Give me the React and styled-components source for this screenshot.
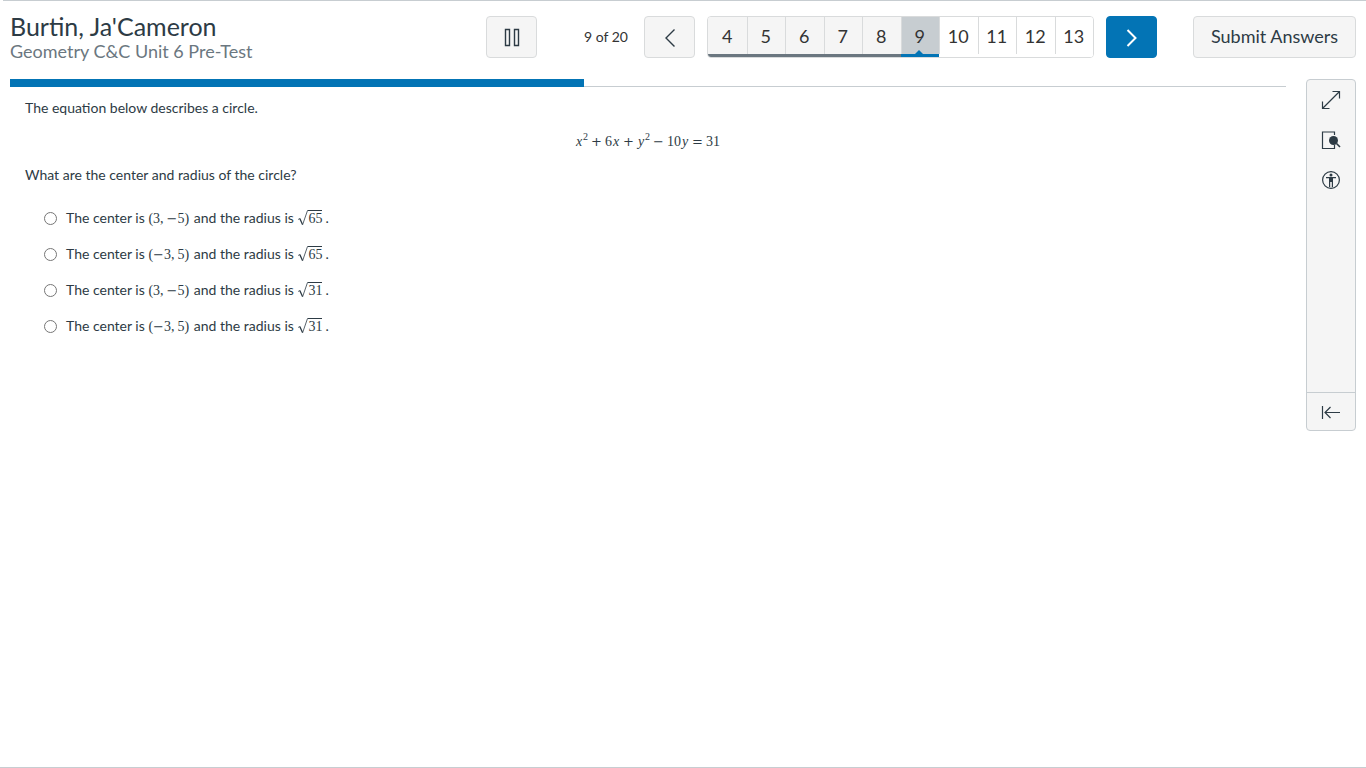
import React, { useState } from "react";
import styled, { createGlobalStyle } from "styled-components";

const GlobalStyle = createGlobalStyle`
  * {
    box-sizing: border-box;
  }
  body {
    margin: 0;
    background: #ffffff;
    color: #2d3b45;
    font-family: Lato, "Liberation Sans", sans-serif;
    font-size: 14px;
    line-height: 20px;
  }
  button {
    font-family: inherit;
    color: inherit;
    padding: 0;
    cursor: pointer;
  }
`;

const Page = styled.div`
  display: flex;
  flex-direction: column;
  min-height: 100vh;
  border-bottom: 1px solid #c7cdd1;
`;

const TopRule = styled.div`
  height: 1px;
  margin-left: 3px;
  background: #c7cdd1;
`;

const Header = styled.header`
  display: flex;
  align-items: flex-start;
  padding: 15px 10px 0;
  height: 78px;
`;

const Heading = styled.div`
  flex: 1;
  min-width: 0;
`;

const Student = styled.h1`
  margin: 0;
  font-size: 25px;
  font-weight: 400;
  line-height: 20px;
`;

const QuizTitle = styled.h2`
  margin: 0;
  color: #6b7780;
  font-size: 18px;
  font-weight: 400;
  line-height: 30px;
`;

const Controls = styled.div`
  display: flex;
  align-items: center;
  gap: 12px;
`;

const Button = styled.button`
  display: flex;
  align-items: center;
  justify-content: center;
  width: ${(props) => (props.$wide ? "163px" : "51px")};
  height: 42px;
  padding-bottom: ${(props) => (props.$wide ? "2px" : "0")};
  border: 1px solid ${(props) => (props.$primary ? "#0374b5" : "#d9dbdc")};
  border-radius: 4px;
  background: ${(props) => (props.$primary ? "#0374b5" : "#f5f5f5")};
  color: ${(props) => (props.$primary ? "#ffffff" : "#2d3b45")};
  font-size: 18px;
`;

const Position = styled.span`
  width: 60px;
  margin-left: 35px;
  margin-right: -12px;
  color: #333333;
  font-size: 14px;
`;

const Pager = styled.nav`
  display: flex;
  width: 387px;
  height: 42px;
  border: 1px solid #d9dbdc;
  border-radius: 4px;
  overflow: hidden;
`;

const PageButton = styled.button`
  position: relative;
  flex: 1;
  border: 0;
  border-bottom: 3px solid
    ${(props) =>
      props.$current ? "#0374b5" : props.$seen ? "#6b7780" : "#ffffff"};
  background: ${(props) =>
    props.$current ? "#c7cdd1" : props.$seen ? "#f5f5f5" : "#ffffff"};
  box-shadow: inset 1px 0 #d9dbdc;
  color: #333333;
  font-size: 18px;

  &:first-child {
    box-shadow: none;
  }
`;

const Pointer = styled.span`
  position: absolute;
  bottom: 0;
  left: 50%;
  margin-left: -5px;
  border: 4px solid transparent;
  border-top: 0;
  border-bottom-color: #0374b5;
`;

const SubmitArea = styled.div`
  margin-left: 36px;
`;

const Body = styled.div`
  display: flex;
  align-items: flex-start;
  gap: 20px;
  padding: 0 10px;
`;

const Content = styled.main`
  flex: 1;
  min-width: 0;
`;

const Track = styled.div`
  height: 8px;
  border-bottom: 1px solid #c7cdd1;
`;

const Fill = styled.div`
  height: 8px;
  background: #0374b5;
`;

const Question = styled.div`
  padding: 11px 0 0 15px;
`;

const Paragraph = styled.p`
  margin: 0;
`;

const Equation = styled.div`
  margin: 13px 15px 13px 0;
  text-align: center;
`;

const Options = styled.fieldset`
  display: flex;
  flex-direction: column;
  gap: 16px;
  margin: 23px 0 0;
  padding: 0 0 0 19px;
  border: 0;
`;

const Option = styled.label`
  display: flex;
  align-items: center;
  gap: 9px;
  height: 20px;
  cursor: pointer;
`;

const Radio = styled.input`
  width: 13px;
  height: 13px;
  margin: 0;
`;

const MathText = styled.span`
  padding-right: 1px;
  font-family: "Liberation Serif", serif;
  font-size: 14px;
  white-space: nowrap;
`;

const Variable = styled.i`
  display: inline-block;
  width: 8px;
  text-align: center;
`;

const Power = styled.sup`
  font-size: 10px;
  line-height: 0;
`;

const Sign = styled.span`
  display: inline-block;
  width: 11px;
  margin: 0 ${(props) => (props.$unary ? "0" : "3px")};
  font-family: "DejaVu Serif", serif;
  font-size: 13px;
  line-height: 14px;
  text-align: center;
`;

const Comma = styled.span`
  margin-right: 3px;
`;

const Root = styled.span`
  display: inline-flex;
  align-items: flex-end;
  height: 16px;
  margin-right: 2px;
  vertical-align: -3px;
`;

const Radicand = styled.span`
  height: 16px;
  border-top: 1px solid #2d3b45;
  line-height: 16px;
`;

const Toolbar = styled.aside`
  display: flex;
  flex-direction: column;
  width: 50px;
  height: 352px;
  border: 1px solid #c7cdd1;
  border-radius: 4px;
  background: #f5f5f5;
`;

const Tools = styled.div`
  flex: 1;
`;

const ToolButton = styled.button`
  display: flex;
  align-items: center;
  justify-content: center;
  width: 100%;
  height: ${(props) => (props.$short ? "37px" : "40px")};
  border: 0;
  background: transparent;
`;

const Collapse = styled.div`
  height: 38px;
  border-top: 1px solid #c7cdd1;
`;

const Icon = ({ children, size = 20 }) => (
  <svg
    width={size}
    height={size}
    viewBox={`0 0 ${size} ${size}`}
    fill="none"
    stroke="currentColor"
    strokeWidth="1.2"
    aria-hidden="true"
  >
    {children}
  </svg>
);

const PauseIcon = () => (
  <Icon>
    <path d="M3.5 2.5h4v16h-4zM12.5 2.5h4v16h-4z" strokeWidth="1.4" />
  </Icon>
);

const PreviousIcon = () => (
  <Icon>
    <path d="M14.5 2.5L6 11l8.5 8.500" strokeWidth="1.4" />
  </Icon>
);

const NextIcon = () => (
  <Icon>
    <path d="M5.5 3L13.500 11l-8 8" strokeWidth="2" />
  </Icon>
);

const ExpandIcon = () => (
  <Icon>
    <path d="M1.5 18.5l17-17M11.5 1.5h7v7M1.5 11.5v7h7" />
  </Icon>
);

const PreviewIcon = () => (
  <Icon>
    <path d="M13.5 5V2h-12v16.500h12V15" />
    <circle cx="12.5" cy="10.5" r="4.5" fill="currentColor" stroke="none" />
    <path d="M15.5 13.500l3.500 3.500" strokeWidth="1.6" />
  </Icon>
);

const AccessIcon = () => (
  <Icon>
    <circle cx="10" cy="10" r="8.4" />
    <circle cx="10" cy="5" r="1.5" fill="currentColor" stroke="none" />
    <path
      d="M5 7h10v1.200h-3V17h-1.200v-5H9.200v5H8V8.200H5z"
      fill="currentColor"
      stroke="none"
    />
  </Icon>
);

const CollapseIcon = () => (
  <Icon>
    <path d="M1.5 4v13M19 10.500H4M9.500 5L4 10.500 9.500 16" />
  </Icon>
);

const SquareRoot = ({ children }) => (
  <Root>
    <svg width="11" height="16" viewBox="0 0 11 16" fill="none" aria-hidden="true">
      <path d="M1 9.500L3 8.500" stroke="#2d3b45" strokeWidth="0.7" />
      <path d="M2.800 8.500L5.500 14.500" stroke="#2d3b45" strokeWidth="1.3" />
      <path d="M5.500 15L10.500 0.500H11" stroke="#2d3b45" strokeWidth="0.8" />
    </svg>
    <Radicand>{children}</Radicand>
  </Root>
);

const Minus = () => <Sign $unary>−</Sign>;

const pages = [4, 5, 6, 7, 8, 9, 10, 11, 12, 13];

const options = [
  { id: "a", flipped: false, radius: 65 },
  { id: "b", flipped: true, radius: 65 },
  { id: "c", flipped: false, radius: 31 },
  { id: "d", flipped: true, radius: 31 },
];

const App = () => {
  const [answer, setAnswer] = useState("");
  const current = 9;
  const total = 20;

  return (
    <>
      <GlobalStyle />
      <Page>
        <TopRule />
        <Header>
          <Heading>
            <Student>Burtin, Ja'Cameron</Student>
            <QuizTitle>Geometry C&amp;C Unit 6 Pre-Test</QuizTitle>
          </Heading>
          <Controls>
            <Button aria-label="Pause">
              <PauseIcon />
            </Button>
            <Position>
              {current} of {total}
            </Position>
            <Button aria-label="Previous">
              <PreviousIcon />
            </Button>
            <Pager>
              {pages.map((page) => (
                <PageButton
                  key={page}
                  $seen={page < current}
                  $current={page === current}
                >
                  {page}
                  {page === current && <Pointer />}
                </PageButton>
              ))}
            </Pager>
            <Button $primary aria-label="Next">
              <NextIcon />
            </Button>
          </Controls>
          <SubmitArea>
            <Button $wide>Submit Answers</Button>
          </SubmitArea>
        </Header>
        <Body>
          <Content>
            <Track>
              <Fill style={{ width: `${(current / total) * 100}%` }} />
            </Track>
            <Question>
              <Paragraph>The equation below describes a circle.</Paragraph>
              <Equation>
                <MathText>
                  <Variable>x</Variable>
                  <Power>2</Power>
                  <Sign>+</Sign>6<Variable>x</Variable>
                  <Sign>+</Sign>
                  <Variable>y</Variable>
                  <Power>2</Power>
                  <Sign>−</Sign>10<Variable>y</Variable>
                  <Sign>=</Sign>31
                </MathText>
              </Equation>
              <Paragraph>What are the center and radius of the circle?</Paragraph>
              <Options>
                {options.map(({ id, flipped, radius }) => (
                  <Option key={id}>
                    <Radio
                      type="radio"
                      name="answer"
                      value={id}
                      checked={answer === id}
                      onChange={() => setAnswer(id)}
                    />
                    <span>
                      The center is{" "}
                      <MathText>
                        ({flipped && <Minus />}3<Comma>,</Comma>
                        {!flipped && <Minus />}5)
                      </MathText>{" "}
                      and the radius is{" "}
                      <MathText>
                        <SquareRoot>{radius}</SquareRoot>
                      </MathText>
                      .
                    </span>
                  </Option>
                ))}
              </Options>
            </Question>
          </Content>
          <Toolbar>
            <Tools>
              <ToolButton aria-label="Full screen">
                <ExpandIcon />
              </ToolButton>
              <ToolButton aria-label="Line reader">
                <PreviewIcon />
              </ToolButton>
              <ToolButton aria-label="Accessibility">
                <AccessIcon />
              </ToolButton>
            </Tools>
            <Collapse>
              <ToolButton $short aria-label="Collapse toolbar">
                <CollapseIcon />
              </ToolButton>
            </Collapse>
          </Toolbar>
        </Body>
      </Page>
    </>
  );
};

export default App;
